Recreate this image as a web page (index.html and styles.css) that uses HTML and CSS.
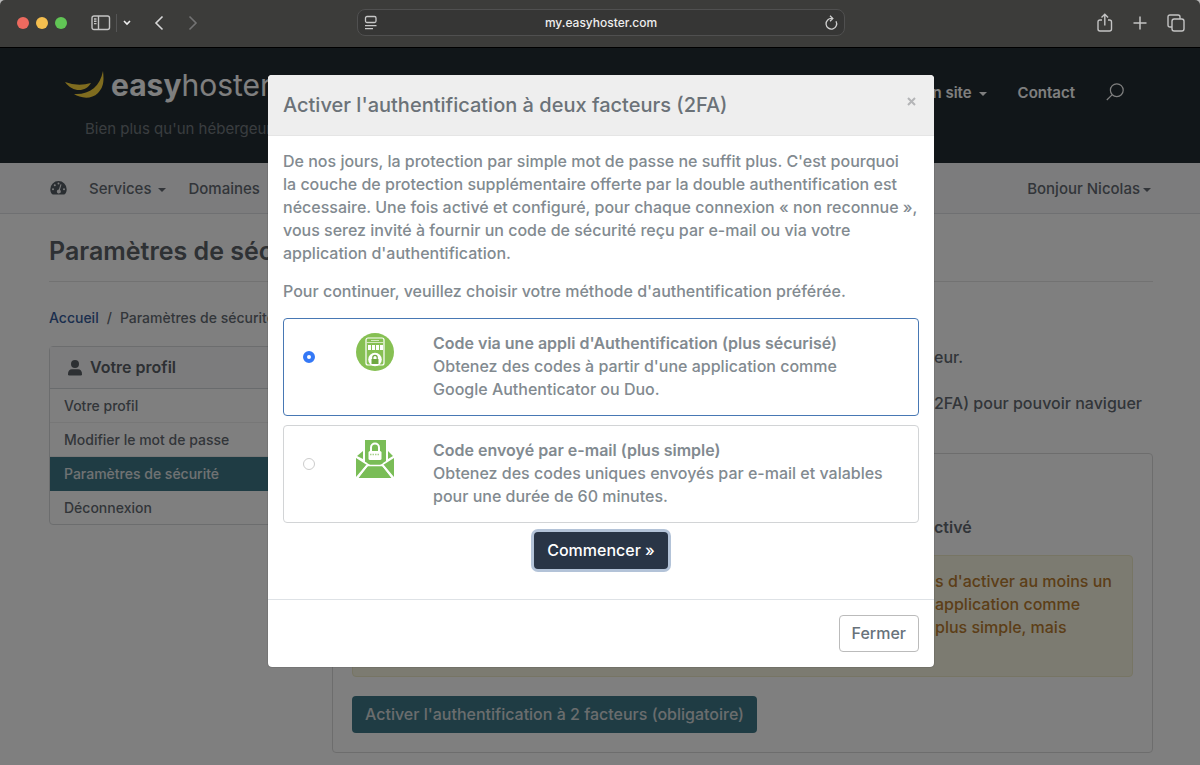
FILE: index.html
```html
<!DOCTYPE html>
<html lang="fr">
<head>
    <meta charset="UTF-8">
    <meta name="viewport" content="width=device-width, initial-scale=1.0">
    <title>Paramètres de sécurité - easyhoster</title>
    <link rel="stylesheet" href="styles.css">
</head>
<body>
    <div class="browser-bar">
        <div class="browser-left">
            <span class="dot red"></span>
            <span class="dot yellow"></span>
            <span class="dot green"></span>
            <svg class="sidebar-icon" width="20" height="16" viewBox="0 0 20 16" fill="none" stroke="#c4c4c4" stroke-width="1.4"><rect x="1" y="1" width="17.5" height="13.5" rx="2"/><path d="M7.5 1v13.5M3 4h2.5M3 6.3h2.5M3 8.6h2.5"/></svg>
            <span class="divider"></span>
            <svg class="chevron-icon" width="8" height="6" viewBox="0 0 8 6" fill="none" stroke="#eee" stroke-width="1.6"><path d="M1 1l3 3 3-3"/></svg>
            <svg class="back-icon" width="10" height="16" viewBox="0 0 10 16" fill="none" stroke="#d8d8d8" stroke-width="1.6"><path d="M8.5 1.5L2 8l6.500 6.500"/></svg>
            <svg class="forward-icon" width="10" height="16" viewBox="0 0 10 16" fill="none" stroke="#737373" stroke-width="1.6"><path d="M1.500 1.500L8 8l-6.500 6.500"/></svg>
        </div>
        <div class="address">
            <svg width="14" height="16" viewBox="0 0 14 16" fill="none" stroke="#c8c8c8" stroke-width="1.3"><rect x="1.500" y="1.500" width="10.500" height="6" rx="1.500"/><path d="M1 10.700h11.500M1 13.700h8"/></svg>
            <span>my.easyhoster.com</span>
            <svg width="14" height="16" viewBox="0 0 14 16" fill="none" stroke="#d0d0d0" stroke-width="1.3"><path d="M12 6.200A5.300 5.300 0 1 1 8 3.500M6 .8L8.800 3.500 6 6.200"/></svg>
        </div>
        <div class="browser-right">
            <svg width="16" height="20" viewBox="0 0 16 20" fill="none" stroke="#c4c4c4" stroke-width="1.400"><path d="M5 7H3Q1 7 1 9v7q0 2 2 2h9.500q2 0 2-2V9q0-2-2-2H11M7.800 12.500V1.500M4.500 4.500l3.300-3.300 3.300 3.300"/></svg>
            <svg width="14" height="14" viewBox="0 0 14 14" fill="none" stroke="#c4c4c4" stroke-width="1.500"><path d="M7 .5v13M.5 7h13"/></svg>
            <svg width="18" height="18" viewBox="0 0 18 18" fill="none" stroke="#c4c4c4" stroke-width="1.400"><rect x="5" y="5" width="12" height="12" rx="2.200"/><path d="M5 13H3q-2 0-2-2V3q0-2 2-2h8q2 0 2 2v2"/></svg>
        </div>
    </div>

    <div class="page">
        <header>
            <div class="brand">
                <a class="logo" href="#">
                    <svg width="40" height="28" viewBox="0 0 40 28" fill="#ffd83e"><path d="M0 11q13 5 26 1c-5 9-18 10-26-1z"/><path d="M38 0c1 9 1 16-5 22-7 7-18 5-24 1 15 1 26-7 29-23z"/></svg>
                    <span><b>easy</b>hoster</span>
                </a>
                <p class="tagline">Bien plus qu'un hébergeur</p>
            </div>
            <nav class="top-links">
                <a class="dropdown" href="#">n site</a>
                <a href="#">Contact</a>
                <a href="#" aria-label="Rechercher"><svg width="18" height="18" viewBox="0 0 18 18" fill="none" stroke="#fff" stroke-width="1.200"><circle cx="10.800" cy="7.200" r="6.400"/><path d="M6 11.800L.8 17"/></svg></a>
            </nav>
        </header>

        <nav class="menu">
            <a href="#" aria-label="Tableau de bord"><svg width="17" height="16" viewBox="0 0 17 16"><path fill="#555c64" d="M8.500 1A8.200 8.200 0 0 0 .3 9.200c0 1.800.5 3.300 1.400 4.600q.5.700 1.300.7h11q.8 0 1.300-.7c.9-1.300 1.400-2.800 1.400-4.600A8.200 8.200 0 0 0 8.500 1z"/><g fill="#f8f9fb"><circle cx="3" cy="9.200" r="1"/><circle cx="4.800" cy="5.200" r="1"/><circle cx="8.500" cy="3.500" r="1"/><circle cx="14" cy="9.200" r="1"/><path d="M10.500 4.200l1 .4-1.600 5.200a2 2 0 1 1-1-.3z"/></g></svg></a>
            <a class="dropdown" href="#">Services</a>
            <a href="#">Domaines</a>
            <a class="dropdown user" href="#">Bonjour Nicolas</a>
        </nav>

        <div class="container">
            <h1>Paramètres de séc</h1>
            <div class="breadcrumb"><a href="#">Accueil</a><span>/</span><span>Paramètres de sécurité</span></div>

            <div class="columns">
                <aside class="profile">
                    <h2><svg width="14" height="16" viewBox="0 0 14 16" fill="#5b6066"><circle cx="7" cy="4" r="4"/><path d="M0 14.200C0 11 1.500 9.300 4 9.300h6c2.500 0 4 1.700 4 4.900q0 1.300-1.300 1.300H1.300Q0 15.500 0 14.200z"/></svg>Votre profil</h2>
                    <a href="#">Votre profil</a>
                    <a href="#">Modifier le mot de passe</a>
                    <a class="active" href="#">Paramètres de sécurité</a>
                    <a href="#">Déconnexion</a>
                </aside>
                <main>
                    <div class="intro">
                        <p>eur.</p>
                        <p>2FA) pour pouvoir naviguer</p>
                    </div>
                    <section class="card">
                        <p class="status">ctivé</p>
                        <div class="warning">s d'activer au moins un<br>application comme<br>plus simple, mais</div>
                        <button class="btn btn-teal" type="button">Activer l'authentification à 2 facteurs (obligatoire)</button>
                    </section>
                </main>
            </div>
        </div>

        <div class="backdrop">
            <form class="modal" role="dialog" aria-labelledby="modal-title">
                <div class="modal-header">
                    <h3 id="modal-title">Activer l'authentification à deux facteurs (2FA)</h3>
                    <button class="close" type="button" aria-label="Fermer la fenêtre"><svg width="9" height="9" viewBox="0 0 9 9" stroke="#b4b5b7" stroke-width="2"><path d="M1 1l7 7M8 1L1 8"/></svg></button>
                </div>
                <div class="modal-body">
                    <p>De nos jours, la protection par simple mot de passe ne suffit plus. C'est pourquoi<br>la couche de protection supplémentaire offerte par la double authentification est<br>nécessaire. Une fois activé et configuré, pour chaque connexion « non reconnue »,<br>vous serez invité à fournir un code de sécurité reçu par e-mail ou via votre<br>application d'authentification.</p>
                    <p>Pour continuer, veuillez choisir votre méthode d'authentification préférée.</p>
                    <label class="method selected">
                        <input type="radio" name="method" value="app" checked>
                        <svg width="38" height="38" viewBox="0 0 38 38"><circle cx="19" cy="19" r="19" fill="#86c053"/><rect x="10" y="5" width="18" height="27" rx="2" fill="none" stroke="#fff" stroke-width="1.200"/><path d="M15 7.500h8M10 9.500h18" stroke="#d5eabf" stroke-width="1"/><path d="M12 12h3v5h-3zM16 12h3v5h-3zM20 12h3v5h-3zM24 12h3v5h-3z" fill="#fff"/><circle cx="19" cy="26.500" r="6.800" fill="#fff"/><path d="M15.500 26h7v5h-7z" fill="#6ea840"/><path d="M16.800 26v-1.500a2.200 2.200 0 0 1 4.400 0V26" fill="none" stroke="#6ea840" stroke-width="1.200"/></svg>
                        <span class="method-text"><strong>Code via une appli d'Authentification (plus sécurisé)</strong><br>Obtenez des codes à partir d'une application comme<br>Google Authenticator ou Duo.</span>
                    </label>
                    <label class="method">
                        <input type="radio" name="method" value="email">
                        <svg width="38" height="38" viewBox="0 0 38 38"><g fill="#7abd57"><path d="M9 0h21v22l-8 4h-6l-7-4z"/><path d="M7 11v8l-6-3zM32 11v8l5-3z"/><path d="M0 17l11 7L0 37zM38 17l-11 7 11 13z"/><path d="M12 26h14l10 12H2z"/></g><path d="M1.500 38L11 25.500h16L36.500 38M0 17l11 7M38 17l-11 7" fill="none" stroke="#fff" stroke-width="1.700"/><path d="M15 11V7.500a4 4 0 0 1 8 0V11" fill="none" stroke="#fff" stroke-width="2"/><rect x="12.500" y="11" width="13" height="9" rx="1.500" fill="#fff"/><path d="M14 14.500h10" stroke="#a9d18f" stroke-width="1.500" stroke-dasharray="1.500 1"/></svg>
                        <span class="method-text"><strong>Code envoyé par e-mail (plus simple)</strong><br>Obtenez des codes uniques envoyés par e-mail et valables<br>pour une durée de 60 minutes.</span>
                    </label>
                    <div class="center"><button class="btn btn-dark" type="button">Commencer »</button></div>
                </div>
                <div class="modal-footer">
                    <button class="btn btn-light" type="button">Fermer</button>
                </div>
            </form>
        </div>
    </div>
</body>
</html>
```
FILE: styles.css
```css
* {
    box-sizing: border-box;
}

body {
    margin: 0;
    min-height: 100vh;
    display: flex;
    flex-direction: column;
    font-family: Inter, "Open Sans", sans-serif;
    font-size: 16px;
    line-height: 23px;
    color: #828a90;
    background: #b8b8b8;
}

h1, h2, h3, p {
    margin: 0;
}

a {
    color: inherit;
    text-decoration: none;
}

svg {
    flex: none;
}

/* browser bar */
.browser-bar {
    display: flex;
    align-items: center;
    height: 48px;
    padding: 0 15px 2px 17px;
    background: #3c3c3a;
    border-bottom: 1px solid #000;
    border-radius: 5px 5px 0 0;
}

.browser-left,
.browser-right {
    flex: 1;
    display: flex;
    align-items: center;
}

.browser-right {
    justify-content: flex-end;
    gap: 20px;
}

.dot {
    width: 12px;
    height: 12px;
    margin-right: 7px;
    border-radius: 50%;
}

.red { background: #ed6a5f; }
.yellow { background: #f5bf4f; }
.green { background: #61c555; }

.sidebar-icon { margin-left: 17px; }

.divider {
    width: 1px;
    height: 18px;
    margin: 0 6px 0 5px;
    background: #555;
}

.back-icon { margin: 0 24px 0 23px; }

.address {
    display: flex;
    align-items: center;
    justify-content: space-between;
    width: 488px;
    height: 27px;
    padding: 0 6px;
    border: 1px solid #505050;
    border-radius: 8px;
    background: #363635;
    color: #eee;
    font-size: 12px;
    font-weight: 500;
}

/* page */
.page {
    position: relative;
    flex: 1;
    background: #fff;
}

header {
    display: flex;
    justify-content: space-between;
    height: 115px;
    padding: 19px 76px 0 65px;
    background: #232d33;
    color: #fff;
}

.logo {
    display: flex;
    align-items: center;
    gap: 6px;
    height: 36px;
    color: #fff;
    font-size: 30px;
    line-height: 36px;
}

.tagline {
    margin: 14px 0 0 20px;
    font-size: 15px;
    color: #747b80;
}

.top-links {
    display: flex;
    align-items: center;
    gap: 31px;
    height: 50px;
    font-size: 15px;
    font-weight: 600;
}

.top-links svg {
    display: block;
}

.dropdown::after {
    content: "";
    display: inline-block;
    margin-left: 7px;
    vertical-align: 2px;
    border: 4px solid transparent;
    border-top-color: currentColor;
    border-bottom: 0;
}

.menu {
    display: flex;
    align-items: center;
    gap: 22px;
    height: 51px;
    padding: 0 49px 0 50px;
    background: #f8f9fb;
    border-bottom: 1px solid #dfe1e5;
    color: #656b73;
    font-size: 15px;
    font-weight: 500;
}

.menu svg {
    display: block;
}

.menu .user {
    margin-left: auto;
}

.user::after {
    margin-left: 3px;
}

.container {
    padding: 22px 47px 13px 49px;
}

h1 {
    padding-bottom: 15px;
    border-bottom: 1px solid #e5e5e5;
    font-size: 25px;
    line-height: 30px;
    font-weight: 600;
    color: #5c6268;
}

.breadcrumb {
    display: flex;
    gap: 8px;
    padding: 24px 0 17px;
    font-size: 14px;
    font-weight: 500;
    color: #666d75;
}

.breadcrumb a {
    color: #365c9c;
}

.columns {
    display: flex;
    align-items: flex-start;
    gap: 30px;
}

.profile {
    width: 253px;
    border: 1px solid #d8dadd;
    border-radius: 4px;
    font-size: 14px;
}

.profile h2 {
    display: flex;
    align-items: center;
    gap: 8px;
    height: 42px;
    padding: 0 18px;
    border-bottom: 1px solid #d3d6da;
    background: #f8f9fb;
    font-size: 16px;
    font-weight: 600;
    color: #5b6066;
}

.profile a {
    display: block;
    padding: 5px 14px;
    border-bottom: 1px solid #eee;
    line-height: 23px;
    font-weight: 500;
    color: #656b73;
}

.profile a:last-child {
    border-bottom: 0;
}

.profile .active {
    background: #3f7988;
    border-color: #3f7988;
    color: #e0e5e7;
}

main {
    flex: 1;
    color: #646b73;
    font-weight: 500;
}

/* the text runs on from under the dialog */
.intro {
    height: 107px;
    padding-left: 602px;
}

.intro p {
    margin-bottom: 23px;
    white-space: nowrap;
}

.card {
    height: 300px;
    padding: 62px 19px 19px;
    border: 1px solid #dadada;
    border-radius: 4px;
}

.status {
    padding-left: 582px;
    font-weight: 600;
}

.warning {
    height: 122px;
    margin: 16px 0 19px;
    padding: 14px 0 14px 582px;
    border: 1px solid #eeebc8;
    border-radius: 4px;
    background: #f9f7e2;
    color: #b87c30;
    white-space: nowrap;
}

.btn {
    height: 37px;
    padding: 0 12px 2px;
    border: 1px solid transparent;
    border-radius: 4px;
    font-family: inherit;
    font-size: 16px;
    font-weight: 500;
    cursor: pointer;
}

.btn-teal {
    background: #3f7988;
    color: #d5dadc;
}

/* dialog */
.backdrop {
    position: absolute;
    inset: 0;
    padding: 27px 0 0 2px;
    background: rgba(0, 0, 0, 0.5);
}

.modal {
    width: 666px;
    max-width: 100%;
    margin: 0 auto;
    background: #fff;
    border-radius: 4px;
    overflow: hidden;
    box-shadow: 0 0 1px #222;
}

.modal-header {
    display: flex;
    align-items: center;
    justify-content: space-between;
    height: 61px;
    padding: 0 15px;
    background: #eee;
    border-bottom: 1px solid #e5e5e5;
}

.modal-header h3 {
    font-size: 20px;
    font-weight: 500;
    color: #6b7278;
}

.close {
    display: flex;
    padding: 3px;
    margin-bottom: 7px;
    border: 0;
    background: none;
}

.modal-body {
    padding: 14px 15px 30px;
    font-weight: 500;
}

.modal-body p {
    margin-bottom: 15px;
    white-space: nowrap;
}

.method {
    display: flex;
    height: 98px;
    margin-bottom: 9px;
    padding: 14px 19px;
    border: 1px solid #d2d4d6;
    border-radius: 4px;
}

.method.selected {
    border-color: #4878b4;
}

.method input {
    appearance: none;
    width: 12px;
    height: 12px;
    margin: 18px 41px 0 0;
    border: 1px solid #ccc;
    border-radius: 50%;
    background: #fff;
}

.method input:checked {
    border: 4px solid #3478f6;
}

.method-text {
    margin: -1px 0 0 39px;
    white-space: nowrap;
}

.method strong {
    font-weight: 600;
}

.center {
    text-align: center;
}

.btn-dark {
    background: #293546;
    color: #fff;
    box-shadow: 0 0 0 3px #b3c3d8;
}

.modal-footer {
    padding: 15px;
    border-top: 1px solid #dee2e6;
    text-align: right;
}

.btn-light {
    background: #fff;
    border-color: #bbb;
    color: #68727a;
}
```
